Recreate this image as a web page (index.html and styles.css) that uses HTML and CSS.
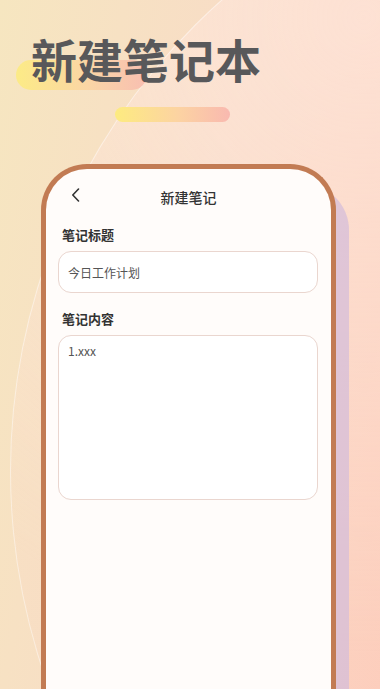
FILE: index.html
```html
<!DOCTYPE html>
<html lang="zh-CN">
<head>
    <meta charset="UTF-8">
    <meta name="viewport" content="width=device-width, initial-scale=1.0">
    <title>新建笔记本</title>
    <link rel="stylesheet" href="styles.css">
</head>
<body>
    <div class="page">
        <div class="arc"></div>
        <div class="hero">
            <div class="hero-mark"></div>
            <h1 class="hero-title">新建笔记本</h1>
        </div>
        <div class="hero-line"></div>

        <div class="phone">
            <div class="nav">
                <span class="nav-back">
                    <svg width="9" height="14" viewBox="0 0 9 14"><path d="M7.5 1 L1.8 7 L7.5 13" fill="none" stroke="#333" stroke-width="1.6" stroke-linecap="round" stroke-linejoin="round"/></svg>
                </span>
                <span class="nav-title">新建笔记</span>
            </div>
            <div class="form">
                <div class="field-label">笔记标题</div>
                <div class="field-input">今日工作计划</div>
                <div class="field-label">笔记内容</div>
                <div class="field-area">1.xxx</div>
            </div>
        </div>
    </div>
</body>
</html>
```

FILE: styles.css
```css
body {
    margin: 0;
    padding: 0;
    font-family: "Noto Sans CJK SC", "Noto Sans", sans-serif;
}
.page {
    position: relative;
    width: 380px;
    height: 689px;
    overflow: hidden;
    background: linear-gradient(100deg, #f6e6c0 0%, #f8dcc6 50%, #fdcdbb 100%);
}
.arc {
    position: absolute;
    left: 10px;
    top: -160px;
    width: 1260px;
    height: 1260px;
    border-radius: 50%;
    border: 1.5px solid rgba(255, 255, 255, 0.45);
    background: radial-gradient(circle at 28% 14%, rgba(255, 232, 222, 0.65), rgba(253, 214, 200, 0.15) 45%);
}
.hero {
    position: relative;
    padding: 30px 0 0 31px;
}
.hero-mark {
    position: absolute;
    left: 16px;
    top: 60px;
    width: 131px;
    height: 30px;
    border-radius: 15px;
    background: linear-gradient(90deg, #fdec7c 0%, #fbd3a0 55%, #f8b9ae 100%);
    opacity: 0.85;
}
.hero-title {
    position: relative;
    margin: 0;
    font-size: 46px;
    line-height: 56px;
    font-weight: 700;
    color: #58585a;
}
.hero-line {
    position: relative;
    margin: 21px 0 0 115px;
    width: 115px;
    height: 15px;
    border-radius: 8px;
    background: linear-gradient(90deg, #fdeb80 0%, #fcd3a2 55%, #f9b9b0 100%);
}
.phone {
    position: relative;
    margin: 42px 0 0 41px;
    width: 295px;
    height: 600px;
    box-sizing: border-box;
    border: 5px solid #c27b53;
    border-bottom: none;
    border-radius: 46px 46px 0 0;
    background: #fffcfa;
    box-shadow: 13px 20px 0 rgba(214, 190, 218, 0.75);
}
.nav {
    position: relative;
    height: 57px;
    display: flex;
    align-items: center;
    justify-content: center;
    padding-bottom: 2px;
    box-sizing: border-box;
}
.nav-back {
    position: absolute;
    left: 25px;
    top: 19px;
    display: flex;
}
.nav-title {
    font-size: 14px;
    font-weight: 500;
    color: #333;
}
.form {
    padding: 0 13px 0 12px;
}
.field-label {
    padding-left: 4px;
    font-size: 13px;
    line-height: 18px;
    font-weight: 700;
    color: #333;
}
.field-input {
    margin-top: 7px;
    height: 42px;
    box-sizing: border-box;
    padding: 0 9px;
    display: flex;
    align-items: center;
    border: 1px solid #ead6cf;
    border-radius: 13px;
    background: #fff;
    font-size: 12px;
    color: #555;
    margin-bottom: 17px;
}
.field-area {
    margin-top: 7px;
    height: 165px;
    box-sizing: border-box;
    padding: 6px 9px;
    border: 1px solid #ead6cf;
    border-radius: 13px;
    background: #fff;
    font-size: 12px;
    line-height: 18px;
    color: #555;
}
```
